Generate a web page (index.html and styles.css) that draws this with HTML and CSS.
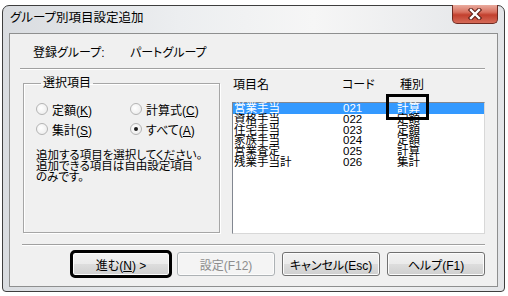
FILE: index.html
```html
<!DOCTYPE html>
<html lang="ja">
<head>
  <meta charset="UTF-8" />
  <title>グループ別項目設定追加</title>
  <link rel="stylesheet" href="styles.css">
</head>
<body>
  <div class="window">
    <div class="titlebar">
      <span class="title">グループ別項目設定追加</span>
      <button class="close-btn" aria-label="閉じる">
        <svg width="16" height="12" viewBox="0 0 16 12">
          <path d="M4 2 L12 10 M12 2 L4 10" stroke="#5a1c14" stroke-width="4.4" stroke-linecap="square"/>
          <path d="M4 2 L12 10 M12 2 L4 10" stroke="#ffffff" stroke-width="2.4" stroke-linecap="square"/>
        </svg>
      </button>
    </div>

    <div class="client">
      <div class="info">
        <span class="info-label">登録グループ:</span>
        <span>パートグループ</span>
      </div>
      <div class="sep"></div>

      <div class="main">
        <fieldset class="group">
          <legend>選択項目</legend>
          <div class="radios">
            <label class="radio"><span class="dot"></span><span>定額(<u>K</u>)</span></label>
            <label class="radio"><span class="dot"></span><span>計算式(<u>C</u>)</span></label>
            <label class="radio"><span class="dot"></span><span>集計(<u>S</u>)</span></label>
            <label class="radio"><span class="dot checked"></span><span>すべて(<u>A</u>)</span></label>
          </div>
          <p class="desc">追加する項目を選択してください。<br>追加できる項目は自由設定項目<br>のみです。</p>
        </fieldset>

        <section class="panel">
          <div class="list-head">
            <span>項目名</span>
            <span>コード</span>
            <span>種別</span>
          </div>
          <div class="listbox">
            <div class="row selected"><span>営業手当</span><span>021</span><span>計算</span></div>
            <div class="row"><span>資格手当</span><span>022</span><span>定額</span></div>
            <div class="row"><span>住宅手当</span><span>023</span><span>定額</span></div>
            <div class="row"><span>家族手当</span><span>024</span><span>定額</span></div>
            <div class="row"><span>営業査定</span><span>025</span><span>計算</span></div>
            <div class="row"><span>残業手当計</span><span>026</span><span>集計</span></div>
          </div>
          <div class="mark-box"></div>
        </section>
      </div>

      <div class="sep bottom-sep"></div>

      <div class="buttons">
        <button class="btn marked">進む(<u>N</u>) &gt;</button>
        <button class="btn" disabled>設定(F12)</button>
        <button class="btn">キャンセル(Esc)</button>
        <button class="btn">ヘルプ(F1)</button>
      </div>
    </div>
  </div>
</body>
</html>
```

FILE: styles.css
```css
* {
  margin: 0;
  padding: 0;
  box-sizing: border-box;
}

body {
  background: #fff;
  font-family: "Liberation Sans", "Noto Sans CJK JP", sans-serif;
  font-size: 12px;
  color: #000;
  font-feature-settings: "palt";
}

.window {
  margin: 5px 0 0 2px;
  width: 503px;
  height: 287px;
  border: 1px solid #3e3e3e;
  border-radius: 7px 7px 4px 4px;
  padding: 0 6px 5px 6px;
  background: linear-gradient(90deg, #d9dce0 0%, #eceef0 35%, #f6f6f6 62%, #e3e5e8 100%);
}

.titlebar {
  height: 27px;
  display: flex;
  justify-content: space-between;
}

.title {
  padding-left: 1px;
  line-height: 24px;
  font-size: 12.5px;
}

.close-btn {
  margin-top: -1px;
  width: 46px;
  height: 19px;
  border: 1px solid #6e2a22;
  border-top: none;
  border-radius: 0 0 5px 5px;
  background: linear-gradient(#e9ab9e 0%, #d8705f 40%, #c2402e 55%, #d56a58 100%);
  display: flex;
  align-items: center;
  justify-content: center;
}

.client {
  height: 254px;
  background: #f0f0f0;
  border: 1px solid #8e8f8f;
  padding: 0 12px 0 10px;
}

.info {
  height: 34px;
  display: flex;
  align-items: center;
  padding-left: 13px;
  padding-top: 1px;
}

.info-label {
  width: 97px;
}

.sep {
  border-top: 1px solid #a0a0a0;
  border-bottom: 1px solid #fff;
}

.main {
  height: 174px;
  display: flex;
  padding-left: 3px;
}

.group {
  margin-top: 6px;
  width: 197px;
  height: 157px;
  border: 1px solid #a6a6a6;
  box-shadow: inset 1px 1px 0 #fff, 1px 1px 0 #fff;
  padding: 0 6px 0 12px;
}

.group legend {
  margin-left: 5px;
  padding: 0 2px;
  line-height: 14px;
}

.radios {
  margin-top: 9px;
  display: grid;
  grid-template-columns: 94px 1fr;
  grid-auto-rows: 20px;
}

.radio {
  display: flex;
  align-items: center;
  gap: 4px;
}

.dot {
  width: 12px;
  height: 12px;
  border-radius: 50%;
  border: 1px solid #b4b4b4;
  background: radial-gradient(circle at 40% 40%, #ffffff, #e8e8e8);
  display: flex;
  align-items: center;
  justify-content: center;
}

.dot.checked::after {
  content: "";
  width: 4px;
  height: 4px;
  border-radius: 50%;
  background: #1e1e1e;
}

.desc {
  margin-top: 11px;
  font-size: 11.5px;
  line-height: 11px;
}

.panel {
  position: relative;
  width: 253px;
  margin-left: 12px;
  padding-top: 8px;
}

.list-head {
  height: 14px;
  line-height: 14px;
  display: grid;
  grid-template-columns: 109px 58px 1fr;
  padding-left: 1px;
}

.listbox {
  margin-top: 10px;
  height: 132px;
  background: #fff;
  border: 1px solid #828790;
  border-right-color: #d8d8d8;
  border-bottom-color: #d8d8d8;
}

.row {
  height: 10.8px;
  line-height: 10.8px;
  font-size: 11.5px;
  display: grid;
  grid-template-columns: 109px 54px 1fr;
  padding-left: 1px;
  white-space: nowrap;
}

.row.selected {
  background: #3399ff;
  color: #fff;
}

.mark-box {
  position: absolute;
  left: 154px;
  top: 24px;
  width: 43px;
  height: 26px;
  border: 3px solid #000;
}

.bottom-sep {
  margin-left: 2px;
}

.buttons {
  margin-top: 6px;
  display: flex;
  justify-content: flex-end;
  gap: 7px;
}

.btn {
  width: 98px;
  height: 24px;
  font-family: inherit;
  font-size: 12px;
  font-feature-settings: "palt";
  color: #000;
  border: 1px solid #707070;
  border-radius: 3px;
  background: linear-gradient(#f2f2f2 0%, #ebebeb 48%, #dddddd 52%, #cfcfcf 100%);
  box-shadow: inset 0 0 0 1px #fcfcfc;
}

.btn:disabled {
  color: #8d8d8d;
  border-color: #adb2b5;
  background: #f4f4f4;
}

.btn.marked {
  outline: 3px solid #000;
  outline-offset: -1px;
}
```
